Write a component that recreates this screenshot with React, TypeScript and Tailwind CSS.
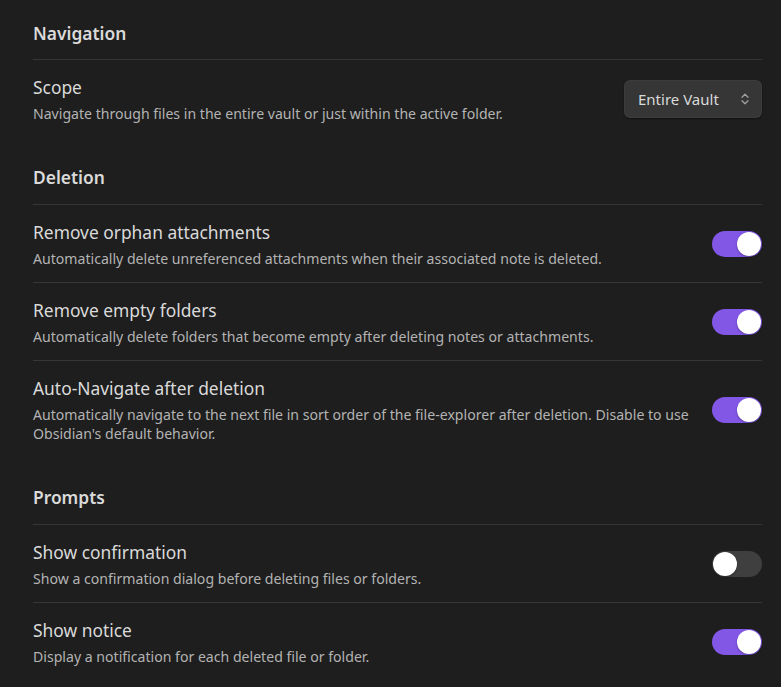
import { useState } from "react";

type Item = {
  name: string;
  desc: string;
  kind: "toggle" | "select";
  on?: boolean;
};

type Section = {
  title: string;
  items: Item[];
};

const sections: Section[] = [
  {
    title: "Navigation",
    items: [
      {
        name: "Scope",
        desc: "Navigate through files in the entire vault or just within the active folder.",
        kind: "select",
      },
    ],
  },
  {
    title: "Deletion",
    items: [
      {
        name: "Remove orphan attachments",
        desc: "Automatically delete unreferenced attachments when their associated note is deleted.",
        kind: "toggle",
        on: true,
      },
      {
        name: "Remove empty folders",
        desc: "Automatically delete folders that become empty after deleting notes or attachments.",
        kind: "toggle",
        on: true,
      },
      {
        name: "Auto-Navigate after deletion",
        desc: "Automatically navigate to the next file in sort order of the file-explorer after deletion. Disable to use Obsidian's default behavior.",
        kind: "toggle",
        on: true,
      },
    ],
  },
  {
    title: "Prompts",
    items: [
      {
        name: "Show confirmation",
        desc: "Show a confirmation dialog before deleting files or folders.",
        kind: "toggle",
        on: false,
      },
      {
        name: "Show notice",
        desc: "Display a notification for each deleted file or folder.",
        kind: "toggle",
        on: true,
      },
    ],
  },
];

function Toggle({ initial }: { initial: boolean }) {
  const [on, setOn] = useState(initial);
  return (
    <button
      type="button"
      onClick={() => setOn(!on)}
      className={`flex h-[26px] w-[50px] shrink-0 items-center rounded-full p-[1px] transition-colors ${
        on ? "justify-end bg-[#8257e6]" : "justify-start bg-[#3f3f3f]"
      }`}
    >
      <span className="h-[24px] w-[24px] rounded-full bg-white shadow-[0_1px_2px_rgba(0,0,0,0.35)]" />
    </button>
  );
}

function Dropdown() {
  return (
    <div className="flex h-[38px] w-[138px] shrink-0 items-center justify-between rounded-[6px] bg-[#363636] pl-[14px] pr-[13px] text-[15px] text-[#dadada] shadow-[0_1px_2px_rgba(0,0,0,0.4),inset_0_0_0_1px_rgba(255,255,255,0.03)]">
      <span>Entire Vault</span>
      <svg width="8" height="12" viewBox="0 0 8 12" fill="none" stroke="#a0a0a0" strokeWidth="1.3" strokeLinecap="round" strokeLinejoin="round">
        <path d="M1 4.2 4 1.2 7 4.2" />
        <path d="M1 7.8 4 10.8 7 7.8" />
      </svg>
    </div>
  );
}

export default function App() {
  return (
    <div
      className="min-h-[687px] w-full bg-[#1e1e1e] pl-[33px] pr-[19px]"
      style={{ fontFamily: "'Noto Sans', 'Open Sans', sans-serif" }}
    >
      {sections.map((section, si) => (
        <div key={section.title}>
          <div className={`pb-[13.5px] ${si === 0 ? "pt-[20.5px]" : "pt-[28px]"}`}>
            <h2 className="text-[17.4px] font-semibold leading-[25px] text-[#dadada]">
              {section.title}
            </h2>
          </div>
          {section.items.map((item) => (
            <div
              key={item.name}
              className="flex items-center border-t border-[#363636] pb-[13.5px] pt-[15px]"
            >
              <div className="mr-[18px] flex-1">
                <div className="text-[17.4px] leading-[24px] text-[#dadada]">
                  {item.name}
                </div>
                <div className="mt-[5px] text-[14.1px] leading-[19.5px] text-[#b3b3b3]">
                  {item.desc}
                </div>
              </div>
              {item.kind === "select" ? (
                <Dropdown />
              ) : (
                <Toggle initial={item.on ?? false} />
              )}
            </div>
          ))}
        </div>
      ))}
    </div>
  );
}
